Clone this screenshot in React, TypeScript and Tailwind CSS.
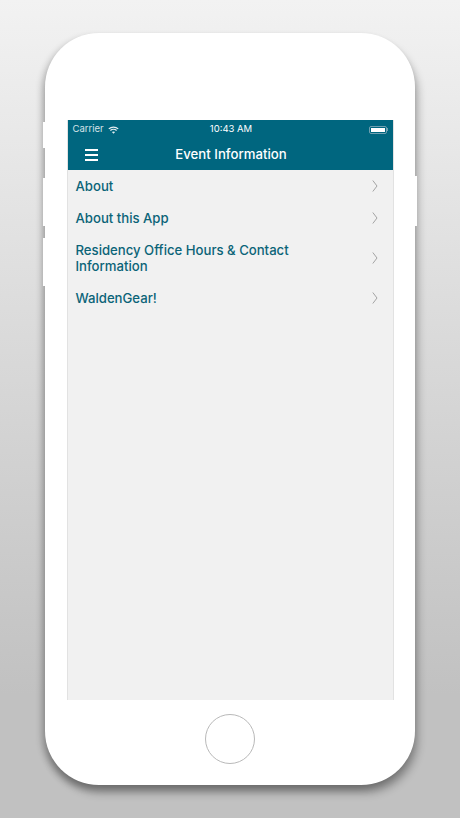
const items = [
  "About",
  "About this App",
  "Residency Office Hours & Contact Information",
  "WaldenGear!",
];

function Wifi() {
  return (
    <svg width="11" height="8" viewBox="0 0 12 9" fill="none" stroke="#e6eef1" strokeWidth="1.4">
      <path d="M0.7 3.2C3.6 0.5 8.4 0.5 11.3 3.2" />
      <path d="M2.5 5C4.4 3.3 7.6 3.3 9.5 5" />
      <path d="M6 8.6L4.2 6.7C5.2 5.9 6.8 5.9 7.8 6.7Z" fill="#e6eef1" stroke="none" />
    </svg>
  );
}

function Battery() {
  return (
    <div className="flex items-center">
      <div className="w-[18px] h-[8px] rounded-[2px] border border-[#6f9fb0] p-px">
        <div className="w-full h-full bg-white" />
      </div>
      <div className="w-px h-[3px] bg-[#6f9fb0]" />
    </div>
  );
}

function Chevron() {
  return (
    <svg width="6" height="12" viewBox="0 0 6 12" fill="none" stroke="#a3a3a3" strokeWidth="1" className="shrink-0">
      <path d="M0.8 0.5L5 6L0.8 11.5" />
    </svg>
  );
}

export default function App() {
  return (
    <div
      className="w-[460px] h-[818px] overflow-hidden flex justify-center pt-[33px] bg-gradient-to-b from-[#f2f2f2] to-[#c1c1c1] to-85%"
      style={{ fontFamily: "Inter, 'Liberation Sans', sans-serif" }}
    >
      <div className="relative w-[370px] h-[752px] shrink-0">
        <div className="w-full h-full bg-white rounded-[54px] shadow-[3px_8px_9px_rgba(0,0,0,0.28),-3px_4px_7px_rgba(0,0,0,0.24)] flex flex-col items-center pt-[87px]">
          <div className="w-[327px] h-[580px] bg-[#f1f1f1] border-x border-[#e2e2e2] flex flex-col">
            <div className="bg-[#00667f] text-white">
              <div className="h-[19px] px-[5px] flex items-center justify-between relative">
                <div className="flex items-center gap-[4px] text-[9.5px] text-[#d5e3e8]">
                  <span>Carrier</span>
                  <Wifi />
                </div>
                <span className="absolute left-[2px] right-0 text-center text-[9.5px]">10:43 AM</span>
                <Battery />
              </div>
              <div className="h-[31px] flex items-center relative pl-[17px]">
                <div className="flex flex-col gap-[3px] w-[13px]">
                  <div className="h-[2px] bg-white" />
                  <div className="h-[2px] bg-white" />
                  <div className="h-[2px] bg-white" />
                </div>
                <span className="absolute left-[2px] right-0 text-center text-[13.2px] font-medium">
                  Event Information
                </span>
              </div>
            </div>
            {items.map((item) => (
              <div key={item} className="flex items-center justify-between pl-[8px] pr-[15px] py-[8px]">
                <span className="w-[240px] text-[13.15px] leading-[16px] font-medium text-[#0b6478]">{item}</span>
                <Chevron />
              </div>
            ))}
          </div>
          <div className="mt-[14px] w-[50px] h-[50px] rounded-full border border-[#b9b9b9]" />
        </div>

        {/* side buttons, they sit on top of the case shadow */}
        <div className="absolute left-[-2px] top-[89px] w-[3px] h-[26px] bg-white" />
        <div className="absolute left-[-2px] top-[145px] w-[3px] h-[48px] bg-white" />
        <div className="absolute left-[-2px] top-[205px] w-[3px] h-[48px] bg-white" />
        <div className="absolute right-[-2px] top-[143px] w-[3px] h-[50px] bg-white" />
      </div>
    </div>
  );
}
